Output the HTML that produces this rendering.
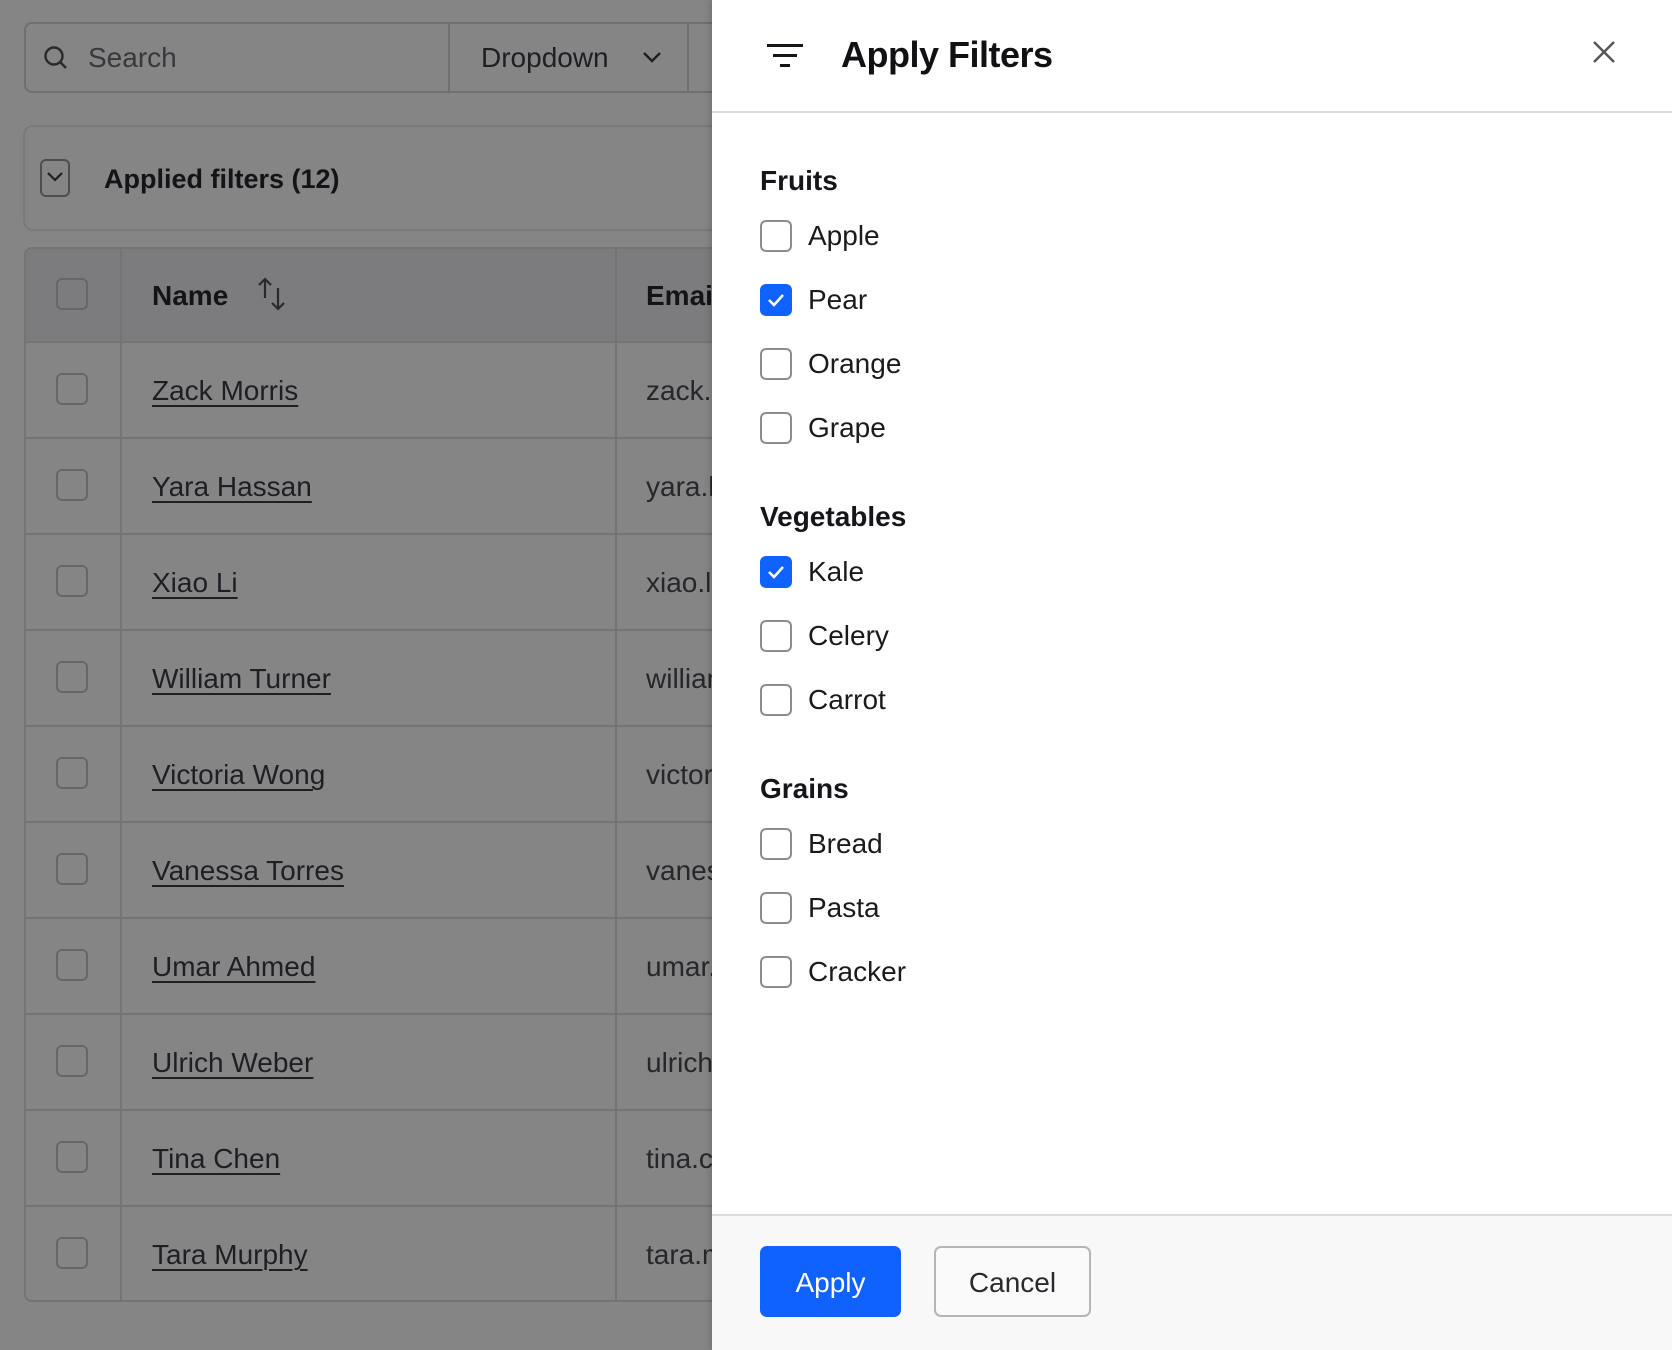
<!DOCTYPE html>
<html><head><meta charset="utf-8"><style>
*{box-sizing:border-box;margin:0;padding:0}
body{width:1672px;height:1350px;overflow:hidden;background:#858585;font-family:"Liberation Sans",Arial,sans-serif;position:relative;color:#1b1b1f}
.a{position:absolute}
.bd{border:2px solid #6f6f72}
.cb{position:absolute;width:32px;height:32px;border:2px solid #66666a;border-radius:6px}
.row{position:absolute;left:24px;width:700px;height:96px;border-top:2px solid #747477}
.nm{position:absolute;left:128px;top:32px;font-size:28px;color:#1e1e24;text-decoration:underline;text-underline-offset:5px;text-decoration-thickness:2px}
.em{position:absolute;left:622px;top:32px;font-size:28px;color:#26262b;white-space:nowrap}
.panel{position:absolute;left:712px;top:0;width:960px;height:1350px;background:#fff;box-shadow:-2px 0 6px rgba(0,0,0,.15)}
.sec{position:absolute;left:48px;font-size:28px;font-weight:bold;color:#16161a}
.it{position:absolute;left:48px;height:32px;width:400px}
.it .b{position:absolute;left:0;top:0;width:32px;height:32px;border:2px solid #8b8b90;border-radius:6px;background:#fff}
.it .b.on{background:#0f62fe;border-color:#0f62fe}
.it span{position:absolute;left:48px;top:-1px;font-size:28px;color:#1b1b1f;line-height:34px}
</style></head><body>
<div class="a bd" style="left:24px;top:22px;width:700px;height:71px;border-radius:8px;border-right:none"></div>
<svg class="a" style="left:42px;top:44px" width="28" height="28" viewBox="0 0 28 28"><circle cx="12" cy="12" r="8.5" fill="none" stroke="#2a2a2e" stroke-width="2.4"/><line x1="18" y1="18" x2="24" y2="24" stroke="#2a2a2e" stroke-width="2.6"/></svg>
<div class="a" style="left:88px;top:42px;font-size:28px;color:#38383d">Search</div>
<div class="a" style="left:448px;top:22px;width:2px;height:71px;background:#6f6f72"></div>
<div class="a" style="left:481px;top:42px;font-size:28px;color:#1e1e24">Dropdown</div>
<svg class="a" style="left:641px;top:50px" width="22" height="14" viewBox="0 0 22 14"><path d="M3 3 L11 11 L19 3" fill="none" stroke="#1e1e24" stroke-width="2.4"/></svg>
<div class="a" style="left:687px;top:22px;width:2px;height:71px;background:#6f6f72"></div>
<div class="a" style="left:23px;top:125px;width:720px;height:106px;border:2px solid #7a7a7d;border-radius:10px"></div>
<div class="a" style="left:40px;top:159px;width:30px;height:38px;border:2px solid #4d4d52;border-radius:6px"></div>
<svg class="a" style="left:45px;top:170px" width="20" height="14" viewBox="0 0 20 14"><path d="M3 3 L10 10 L17 3" fill="none" stroke="#1e1e24" stroke-width="2.2"/></svg>
<div class="a" style="left:104px;top:164px;font-size:27px;font-weight:bold;color:#141418">Applied filters (12)</div>
<div class="a" style="left:24px;top:247px;width:700px;height:1055px;border:2px solid #747477;border-radius:8px;border-right:none;overflow:hidden">
<div class="a" style="left:0;top:0;width:700px;height:92px;background:#7c7c7e"></div>
</div>
<div class="a" style="left:120px;top:247px;width:2px;height:1054px;background:#747477"></div>
<div class="a" style="left:615px;top:247px;width:2px;height:1054px;background:#747477"></div>
<div class="cb" style="left:56px;top:278px"></div>
<div class="a" style="left:152px;top:280px;font-size:28px;font-weight:bold;color:#141418">Name</div>
<svg class="a" style="left:256px;top:276px" width="32" height="36" viewBox="0 0 32 36"><path d="M9 22 V3 M3 9 L9 3 L15 9" fill="none" stroke="#2a2a2e" stroke-width="2.2"/><path d="M22 12 V33 M16 27 L22 33 L28 27" fill="none" stroke="#2a2a2e" stroke-width="2.2"/></svg>
<div class="a" style="left:646px;top:280px;font-size:28px;font-weight:bold;color:#141418">Email</div>

<div class="row" style="top:341px"><div class="cb" style="left:32px;top:30px"></div><div class="nm">Zack Morris</div><div class="em">zack.morris@example.com</div></div>
<div class="row" style="top:437px"><div class="cb" style="left:32px;top:30px"></div><div class="nm">Yara Hassan</div><div class="em">yara.hassan@example.com</div></div>
<div class="row" style="top:533px"><div class="cb" style="left:32px;top:30px"></div><div class="nm">Xiao Li</div><div class="em">xiao.li@example.com</div></div>
<div class="row" style="top:629px"><div class="cb" style="left:32px;top:30px"></div><div class="nm">William Turner</div><div class="em">william.turner@example.com</div></div>
<div class="row" style="top:725px"><div class="cb" style="left:32px;top:30px"></div><div class="nm">Victoria Wong</div><div class="em">victoria.wong@example.com</div></div>
<div class="row" style="top:821px"><div class="cb" style="left:32px;top:30px"></div><div class="nm">Vanessa Torres</div><div class="em">vanessa.torres@example.com</div></div>
<div class="row" style="top:917px"><div class="cb" style="left:32px;top:30px"></div><div class="nm">Umar Ahmed</div><div class="em">umar.ahmed@example.com</div></div>
<div class="row" style="top:1013px"><div class="cb" style="left:32px;top:30px"></div><div class="nm">Ulrich Weber</div><div class="em">ulrich.weber@example.com</div></div>
<div class="row" style="top:1109px"><div class="cb" style="left:32px;top:30px"></div><div class="nm">Tina Chen</div><div class="em">tina.chen@example.com</div></div>
<div class="row" style="top:1205px"><div class="cb" style="left:32px;top:30px"></div><div class="nm">Tara Murphy</div><div class="em">tara.murphy@example.com</div></div>

<div class="panel">
<svg class="a" style="left:54px;top:42px" width="38" height="28" viewBox="0 0 38 28"><rect x="1" y="2" width="36" height="3" fill="#16161a"/><rect x="7" y="12" width="24" height="3" fill="#16161a"/><rect x="14" y="22" width="10" height="3" fill="#16161a"/></svg>
<div class="a" style="left:129px;top:34px;font-size:36px;font-weight:bold;color:#111114;letter-spacing:-0.5px">Apply Filters</div>
<svg class="a" style="left:880px;top:40px" width="24" height="24" viewBox="0 0 24 24"><path d="M2 2 L22 22 M22 2 L2 22" stroke="#555559" stroke-width="2.4"/></svg>
<div class="a" style="left:0;top:111px;width:960px;height:2px;background:#dcdce0"></div>

<div class="sec" style="top:165px">Fruits</div>
<div class="it" style="top:220px"><div class="b"></div><span>Apple</span></div>
<div class="it" style="top:284px"><div class="b on"><svg width="28" height="28" viewBox="0 0 28 28"><path d="M7 14 L12 19 L21 9" fill="none" stroke="#fff" stroke-width="2.6"/></svg></div><span>Pear</span></div>
<div class="it" style="top:348px"><div class="b"></div><span>Orange</span></div>
<div class="it" style="top:412px"><div class="b"></div><span>Grape</span></div>

<div class="sec" style="top:501px">Vegetables</div>
<div class="it" style="top:556px"><div class="b on"><svg width="28" height="28" viewBox="0 0 28 28"><path d="M7 14 L12 19 L21 9" fill="none" stroke="#fff" stroke-width="2.6"/></svg></div><span>Kale</span></div>
<div class="it" style="top:620px"><div class="b"></div><span>Celery</span></div>
<div class="it" style="top:684px"><div class="b"></div><span>Carrot</span></div>

<div class="sec" style="top:773px">Grains</div>
<div class="it" style="top:828px"><div class="b"></div><span>Bread</span></div>
<div class="it" style="top:892px"><div class="b"></div><span>Pasta</span></div>
<div class="it" style="top:956px"><div class="b"></div><span>Cracker</span></div>

<div class="a" style="left:0;top:1214px;width:960px;height:136px;background:#f8f8f9;border-top:2px solid #dcdce0"></div>
<div class="a" style="left:48px;top:1246px;width:141px;height:71px;background:#0f62fe;border-radius:7px;color:#fff;font-size:28px;text-align:center;line-height:73px">Apply</div>
<div class="a" style="left:222px;top:1246px;width:157px;height:71px;background:#fafafa;border:2px solid #b5b5b8;border-radius:7px;color:#2a2a2e;font-size:28px;text-align:center;line-height:69px">Cancel</div>
</div>
</body></html>
